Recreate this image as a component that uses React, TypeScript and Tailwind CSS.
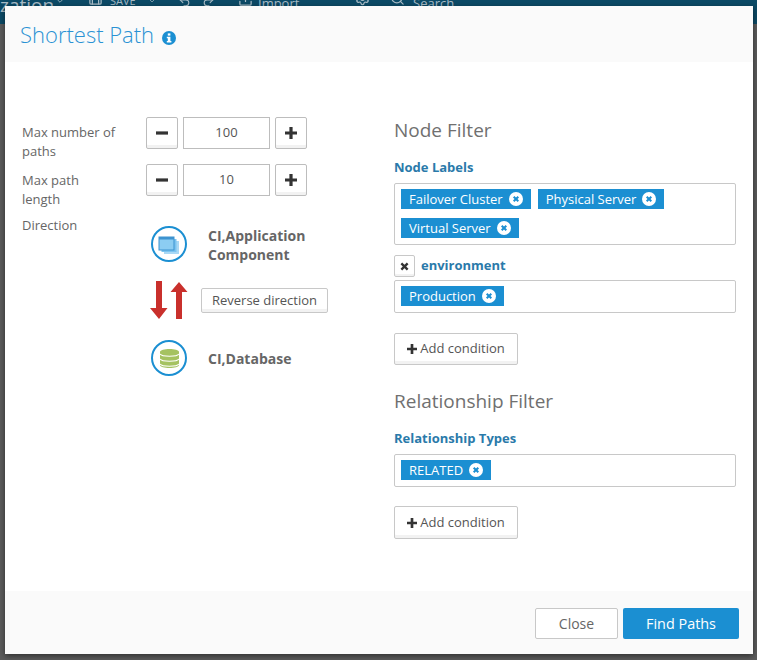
import { Save, Undo2, Redo2, Upload, Settings, Search, ChevronDown } from "lucide-react";
import type { ReactNode } from "react";

function CloseCircle() {
  return (
    <svg viewBox="0 0 14 14" className="ml-[6px] h-[14px] w-[14px] shrink-0">
      <circle cx="7" cy="7" r="7" fill="#fff" />
      <path d="M4.7 4.7l4.6 4.6M9.3 4.7l-4.6 4.6" stroke="#1b8fd2" strokeWidth="2" fill="none" />
    </svg>
  );
}

function Tag({ label }: { label: string }) {
  return (
    <span className="flex h-5 items-center bg-[#1b8fd2] px-2 text-[13px] leading-5 text-white">
      {label}
      <CloseCircle />
    </span>
  );
}

function TagBox({ children }: { children: ReactNode }) {
  return (
    <div className="flex w-[342px] flex-wrap gap-x-[7px] gap-y-[9px] rounded-[2px] border border-[#c8c8c8] bg-white px-[6px] pb-[6px] pt-[5px]">
      {children}
    </div>
  );
}

function PlusGlyph({ size }: { size: number }) {
  return (
    <svg viewBox="0 0 12 12" width={size} height={size} className="shrink-0">
      <path d="M4.4 0h3.2v4.4H12v3.2H7.6V12H4.4V7.6H0V4.4h4.4z" fill="#333" />
    </svg>
  );
}

function MinusGlyph() {
  return (
    <svg viewBox="0 0 12 12" width={12} height={12}>
      <rect x="0" y="4.4" width="12" height="3.2" fill="#333" />
    </svg>
  );
}

function StepButton({ children }: { children: ReactNode }) {
  return (
    <button className="flex h-8 w-8 items-center justify-center rounded-[2px] border border-[#bdbdbd] bg-white shadow-[inset_0_-3px_0_#f2f2f2]">
      {children}
    </button>
  );
}

function Stepper({ value }: { value: string }) {
  return (
    <div className="flex h-8 w-[161px] items-center gap-[5px]">
      <StepButton>
        <MinusGlyph />
      </StepButton>
      <div className="flex h-8 w-[87px] items-center justify-center border border-[#bdbdbd] text-[13px] text-[#555]">
        {value}
      </div>
      <StepButton>
        <PlusGlyph size={12} />
      </StepButton>
    </div>
  );
}

function AddCondition({ tall }: { tall?: boolean }) {
  return (
    <button
      className={`flex w-[124px] items-center justify-center gap-[3px] rounded-[2px] border border-[#c8c8c8] bg-white text-[13px] text-[#555] shadow-[inset_0_-3px_0_#f2f2f2] ${tall ? "h-[33px]" : "h-8"}`}
    >
      <PlusGlyph size={10} />
      Add condition
    </button>
  );
}

function AppIcon() {
  return (
    <svg viewBox="0 0 36 36" className="h-9 w-9 shrink-0">
      <circle cx="18" cy="18" r="17" fill="#fff" stroke="#1b8fd2" strokeWidth="2" />
      <rect x="13" y="15" width="15" height="13" fill="#a9d8f5" />
      <rect x="10.5" y="13" width="15" height="13" fill="#7cc4f0" />
      <rect x="8" y="11" width="15" height="13" fill="#8ccdf2" stroke="#3d93d0" strokeWidth="1" />
      <rect x="8" y="11" width="15" height="2.5" fill="#3d93d0" />
    </svg>
  );
}

function DbIcon() {
  return (
    <svg viewBox="0 0 36 36" className="h-9 w-9 shrink-0">
      <circle cx="18" cy="18" r="17" fill="#fff" stroke="#1b8fd2" strokeWidth="2" />
      <path d="M9 12c0-4 19-4 19 0v13c0 4-19 4-19 0z" fill="#a5c261" />
      <path d="M9 14c2 3 17 3 19 0M9 19c2 3 17 3 19 0M9 24c2 3 17 3 19 0" fill="none" stroke="#fff" strokeWidth="1.2" />
    </svg>
  );
}

function Arrows() {
  return (
    <svg viewBox="0 0 38 39" className="h-[39px] w-[38px] shrink-0">
      <path d="M6 0h6v27h5.5L9 38 0 27h6z" fill="#c9302c" />
      <path d="M26 38h6V11h5.5L29 1l-8.5 10H26z" fill="#c9302c" />
    </svg>
  );
}

export default function App() {
  return (
    <div className="relative h-[660px] w-[757px] overflow-hidden bg-[#5c5c5c] font-['Open_Sans',sans-serif]">
      {/* page behind the dialog */}
      <div className="flex h-6 items-start overflow-hidden bg-[#0c4a66] text-[#a9bcc6]">
        <span className="mt-[-8px] w-[50px] text-[19px] leading-[26px]">zation</span>
        <ChevronDown size={10} className="ml-[5px] mt-[-4px]" />
        <Save size={15} className="ml-[23px] mt-[-9px]" />
        <span className="ml-[7px] mt-[-6px] w-[26px] text-[11px] leading-[14px]">SAVE</span>
        <ChevronDown size={8} className="ml-[12px] mt-[-3px]" />
        <Undo2 size={13} className="ml-[22px] mt-[-5px]" />
        <Redo2 size={13} className="ml-[11px] mt-[-5px]" />
        <Upload size={15} className="ml-[23px] mt-[-8px]" />
        <span className="ml-[5px] mt-[-7px] w-[40px] text-[13px] leading-5">Import</span>
        <Settings size={15} className="ml-[57px] mt-[-9px]" />
        <Search size={15} className="ml-[20px] mt-[-9px]" />
        <span className="ml-2 mt-[-7px] text-[13px] leading-5">Search</span>
      </div>

      <div className="absolute left-[5px] top-[6px] flex h-[648px] w-[748px] flex-col bg-white shadow-[0_2px_6px_rgba(0,0,0,0.5)]">
        <div className="flex h-14 items-center bg-[#fafafa] pl-[15px]">
          <h1 className="text-[22px] font-light text-[#2a92d4]">Shortest Path</h1>
          <svg viewBox="0 0 14 14" className="ml-2 mt-[7px] h-[14px] w-[14px]">
            <circle cx="7" cy="7" r="7" fill="#1b8fd2" />
            <rect x="5.8" y="2.4" width="2.6" height="2.2" fill="#fff" />
            <path d="M4.8 5.8h3.6v4.2h1v1.4H4.8V10h1V7.2h-1z" fill="#fff" />
          </svg>
        </div>

        <div className="flex flex-1 pl-[17px]">
          <div className="w-[372px] pt-[55px]">
            <div className="flex">
              <div className="w-[124px] pb-[3px] pr-[27px] pt-[6px] text-[13px] leading-[19px] text-[#666]">
                Max number of paths
              </div>
              <Stepper value="100" />
            </div>
            <div className="flex">
              <div className="w-[124px] pr-[27px] pt-[7px] text-[13px] leading-[19px] text-[#666]">
                Max path length
              </div>
              <Stepper value="10" />
            </div>
            <div className="mt-[7px] flex">
              <div className="w-[124px] text-[13px] leading-[19px] text-[#666]">Direction</div>
              <div className="pt-[10px]">
                <div className="flex items-start pl-[5px]">
                  <AppIcon />
                  <p className="ml-[21px] w-[110px] text-[14px] font-bold leading-[19px] text-[#666]">
                    CI,Application Component
                  </p>
                </div>
                <div className="mt-[17px] flex items-center pl-[4px]">
                  <Arrows />
                  <button className="ml-[13px] h-[25px] w-[127px] rounded-[2px] border border-[#c8c8c8] bg-white text-[13px] text-[#555] shadow-[inset_0_-3px_0_#f2f2f2]">
                    Reverse direction
                  </button>
                </div>
                <div className="mt-[20px] flex items-center pl-[5px]">
                  <DbIcon />
                  <p className="ml-[21px] text-[14px] font-bold text-[#666]">CI,Database</p>
                </div>
              </div>
            </div>
          </div>

          <div className="pt-[49px]">
            <h2 className="mt-[6px] text-[19px] leading-[26px] text-[#707070]">Node Filter</h2>
            <p className="mb-[7px] mt-[15px] text-[13px] font-bold leading-[18px] text-[#2a7aaa]">Node Labels</p>
            <TagBox>
              <Tag label="Failover Cluster" />
              <Tag label="Physical Server" />
              <Tag label="Virtual Server" />
            </TagBox>
            <div className="mb-[3px] mt-[10px] flex items-center gap-[6px]">
              <button className="flex h-[22px] w-[21px] items-center justify-center rounded-[2px] border border-[#c8c8c8] bg-white shadow-[inset_0_-2px_0_#f2f2f2]">
                <svg viewBox="0 0 10 10" className="h-[9px] w-[9px]">
                  <path d="M1.5 1.5l7 7M8.5 1.5l-7 7" stroke="#333" strokeWidth="2.6" fill="none" />
                </svg>
              </button>
              <span className="text-[13px] font-bold text-[#2a7aaa]">environment</span>
            </div>
            <TagBox>
              <Tag label="Production" />
            </TagBox>
            <div className="mt-5">
              <AddCondition />
            </div>
            <h2 className="mt-[23px] text-[19px] leading-[26px] text-[#707070]">Relationship Filter</h2>
            <p className="mb-[7px] mt-[15px] text-[13px] font-bold leading-[18px] text-[#2a7aaa]">Relationship Types</p>
            <TagBox>
              <Tag label="RELATED" />
            </TagBox>
            <div className="mt-[19px]">
              <AddCondition tall />
            </div>
          </div>
        </div>

        <div className="flex h-[63px] items-start justify-end gap-[5px] bg-[#fafafa] pr-[14px] pt-[17px]">
          <button className="h-[31px] w-[83px] rounded-[2px] border border-[#c8c8c8] bg-white text-[14px] text-[#666]">
            Close
          </button>
          <button className="h-[31px] w-[116px] rounded-[2px] bg-[#1b8fd2] text-[14.4px] text-white">
            Find Paths
          </button>
        </div>
      </div>
    </div>
  );
}
